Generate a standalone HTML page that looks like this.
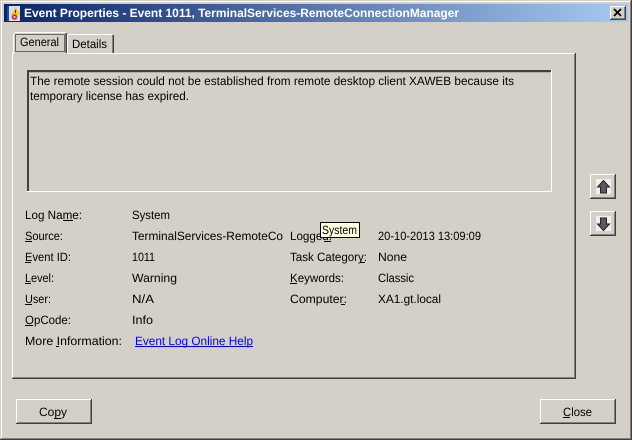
<!DOCTYPE html>
<html>
<head>
<meta charset="utf-8">
<style>
html,body{margin:0;padding:0;background:#D4D0C8;width:632px;height:440px;overflow:hidden}
svg{display:block}
text{font-family:"Liberation Sans",sans-serif;font-size:12px;fill:#000;white-space:pre;text-rendering:geometricPrecision}
</style>
</head>
<body>
<svg width="632" height="440" viewBox="0 0 632 440" xmlns="http://www.w3.org/2000/svg" shape-rendering="crispEdges">
<defs>
<linearGradient id="tb" x1="0" x2="1" y1="0" y2="0"><stop offset="0" stop-color="#0A246A"/><stop offset="1" stop-color="#A6CAF0"/></linearGradient>
<clipPath id="c1"><rect x="130" y="225" width="153" height="20"/></clipPath>
</defs>
<rect width="632" height="440" fill="#D4D0C8"/>
<!-- window frame -->
<rect x="1" y="1" width="630" height="1" fill="#fff"/>
<rect x="1" y="1" width="1" height="437" fill="#fff"/>
<rect x="630" y="1" width="1" height="438" fill="#808080"/>
<rect x="631" y="0" width="1" height="440" fill="#404040"/>
<rect x="1" y="438" width="630" height="1" fill="#808080"/>
<rect x="0" y="439" width="632" height="1" fill="#404040"/>
<!-- title bar -->
<rect x="4" y="4" width="624" height="18" fill="url(#tb)"/>
<g>
<rect x="8" y="6" width="12" height="15" fill="#8ea6cc"/>
<rect x="7" y="6" width="2" height="15" fill="#2c4a86"/>
<rect x="9" y="6" width="11" height="15" fill="#d5deee"/>
<path d="M15.500 7 L20 15 L11 15 Z" fill="#f4c820" shape-rendering="auto"/>
<rect x="15" y="10" width="1" height="3" fill="#222"/>
<circle cx="14.500" cy="17" r="2.800" fill="#c83038" shape-rendering="auto"/>
<circle cx="14.500" cy="17" r="1" fill="#eee" shape-rendering="auto"/>
</g>
<text x="24" y="17" textLength="435" lengthAdjust="spacingAndGlyphs" style="font-weight:bold;fill:#fff">Event Properties - Event 1011, TerminalServices-RemoteConnectionManager</text>
<!-- close button -->
<rect x="610" y="6" width="16" height="14" fill="#D4D0C8"/>
<rect x="610" y="6" width="16" height="1" fill="#fff"/>
<rect x="610" y="6" width="1" height="14" fill="#fff"/>
<rect x="625" y="6" width="1" height="14" fill="#404040"/>
<rect x="610" y="19" width="16" height="1" fill="#404040"/>
<rect x="624" y="7" width="1" height="12" fill="#808080"/>
<rect x="611" y="18" width="14" height="1" fill="#808080"/>
<path d="M614 9 L621 16 M621 9 L614 16" stroke="#000" stroke-width="1.800" fill="none" shape-rendering="auto"/>
<!-- tab panel -->
<rect x="12" y="53" width="1" height="326" fill="#fff"/>
<rect x="12" y="53" width="564" height="1" fill="#fff"/>
<rect x="575" y="53" width="1" height="326" fill="#404040"/>
<rect x="574" y="54" width="1" height="324" fill="#808080"/>
<rect x="12" y="378" width="564" height="1" fill="#404040"/>
<rect x="13" y="377" width="562" height="1" fill="#808080"/>
<!-- General tab -->
<rect x="13" y="33" width="54" height="21" fill="#D4D0C8"/>
<rect x="13" y="34" width="1" height="20" fill="#fff"/>
<rect x="14" y="33" width="1" height="1" fill="#fff"/>
<rect x="15" y="32" width="51" height="1" fill="#fff"/>
<rect x="66" y="33" width="1" height="20" fill="#404040"/>
<rect x="65" y="33" width="1" height="20" fill="#808080"/>
<rect x="15.500" y="34.500" width="49" height="17" fill="none" stroke="#000" stroke-dasharray="1 1"/>
<text x="20" y="46" textLength="39" lengthAdjust="spacingAndGlyphs">General</text>
<!-- Details tab -->
<rect x="67" y="35" width="1" height="18" fill="#fff"/>
<rect x="68" y="34" width="44" height="1" fill="#fff"/>
<rect x="113" y="35" width="1" height="18" fill="#404040"/>
<rect x="112" y="35" width="1" height="18" fill="#808080"/>
<text x="72" y="48" textLength="35" lengthAdjust="spacingAndGlyphs">Details</text>
<!-- message box -->
<rect x="27" y="70" width="525" height="2" fill="#404040"/>
<rect x="27" y="70" width="2" height="122" fill="#404040"/>
<rect x="29" y="72" width="521" height="1" fill="#808080" opacity=".4"/>
<rect x="551" y="70" width="1" height="122" fill="#fff"/>
<rect x="27" y="191" width="525" height="1" fill="#fff"/>
<text x="30" y="85" textLength="484" lengthAdjust="spacingAndGlyphs">The remote session could not be established from remote desktop client XAWEB because its</text>
<text x="30" y="100" textLength="159" lengthAdjust="spacingAndGlyphs">temporary license has expired.</text>
<!-- left labels -->
<text x="25" y="219" textLength="57" lengthAdjust="spacingAndGlyphs">Log Name:</text>
<rect x="63" y="220" width="10" height="1" fill="#000"/>
<text x="25" y="240" textLength="38" lengthAdjust="spacingAndGlyphs">Source:</text>
<rect x="25" y="241" width="7" height="1" fill="#000"/>
<text x="25" y="261" textLength="46" lengthAdjust="spacingAndGlyphs">Event ID:</text>
<rect x="25" y="262" width="6" height="1" fill="#000"/>
<text x="25" y="282" textLength="29" lengthAdjust="spacingAndGlyphs">Level:</text>
<rect x="25" y="283" width="6" height="1" fill="#000"/>
<text x="25" y="303" textLength="26" lengthAdjust="spacingAndGlyphs">User:</text>
<rect x="25" y="304" width="7" height="1" fill="#000"/>
<text x="25" y="324" textLength="46" lengthAdjust="spacingAndGlyphs">OpCode:</text>
<rect x="25" y="325" width="8" height="1" fill="#000"/>
<text x="25" y="345" textLength="97" lengthAdjust="spacingAndGlyphs">More Information:</text>
<rect x="56" y="346" width="3" height="1" fill="#000"/>
<!-- left values -->
<text x="132" y="219" textLength="38" lengthAdjust="spacingAndGlyphs">System</text>
<text x="132" y="240" textLength="151" lengthAdjust="spacingAndGlyphs" clip-path="url(#c1)">TerminalServices-RemoteCo</text>
<text x="132" y="261" textLength="23" lengthAdjust="spacingAndGlyphs">1011</text>
<text x="132" y="282" textLength="45" lengthAdjust="spacingAndGlyphs">Warning</text>
<text x="132" y="303" textLength="22" lengthAdjust="spacingAndGlyphs">N/A</text>
<text x="132" y="324" textLength="21" lengthAdjust="spacingAndGlyphs">Info</text>
<text x="135" y="345" textLength="118" lengthAdjust="spacingAndGlyphs" style="fill:#0000ff">Event Log Online Help</text>
<rect x="135" y="346" width="118" height="1" fill="#0000ff"/>
<!-- right labels -->
<text x="290" y="240" textLength="42" lengthAdjust="spacingAndGlyphs">Logged:</text>
<rect x="324" y="241" width="7" height="1" fill="#000"/>
<text x="290" y="261" textLength="77" lengthAdjust="spacingAndGlyphs">Task Category:</text>
<rect x="360" y="262" width="5" height="1" fill="#000"/>
<text x="290" y="282" textLength="54" lengthAdjust="spacingAndGlyphs">Keywords:</text>
<rect x="290" y="283" width="7" height="1" fill="#000"/>
<text x="290" y="303" textLength="57" lengthAdjust="spacingAndGlyphs">Computer:</text>
<rect x="341" y="304" width="4" height="1" fill="#000"/>
<!-- right values -->
<text x="378" y="240" textLength="103" lengthAdjust="spacingAndGlyphs">20-10-2013 13:09:09</text>
<text x="378" y="261" textLength="29" lengthAdjust="spacingAndGlyphs">None</text>
<text x="378" y="282" textLength="36" lengthAdjust="spacingAndGlyphs">Classic</text>
<text x="378" y="303" textLength="63" lengthAdjust="spacingAndGlyphs">XA1.gt.local</text>
<!-- tooltip -->
<rect x="320.500" y="222.500" width="39" height="15" fill="#FFFFE1" stroke="#000"/>
<text x="322" y="234" textLength="35" lengthAdjust="spacingAndGlyphs">System</text>
<!-- up button -->
<rect x="590" y="174" width="26" height="1" fill="#fff"/>
<rect x="590" y="174" width="1" height="25" fill="#fff"/>
<rect x="615" y="174" width="1" height="25" fill="#404040"/>
<rect x="590" y="198" width="26" height="1" fill="#404040"/>
<rect x="614" y="175" width="1" height="23" fill="#808080"/>
<rect x="591" y="197" width="24" height="1" fill="#808080"/>
<rect x="596" y="179" width="15" height="15" fill="#EFEFEF"/>
<path d="M603.500 180.500 L597.500 187 L600.500 187 L600.500 193 L606.500 193 L606.500 187 L609.500 187 Z" fill="#5a5a5a" stroke="#222" stroke-width="1" shape-rendering="auto"/>
<!-- down button -->
<rect x="590" y="211" width="26" height="1" fill="#fff"/>
<rect x="590" y="211" width="1" height="25" fill="#fff"/>
<rect x="615" y="211" width="1" height="25" fill="#404040"/>
<rect x="590" y="235" width="26" height="1" fill="#404040"/>
<rect x="614" y="212" width="1" height="23" fill="#808080"/>
<rect x="591" y="234" width="24" height="1" fill="#808080"/>
<rect x="596" y="216" width="15" height="15" fill="#EFEFEF"/>
<path d="M603.500 230.500 L597.500 224 L600.500 224 L600.500 218 L606.500 218 L606.500 224 L609.500 224 Z" fill="#5a5a5a" stroke="#222" stroke-width="1" shape-rendering="auto"/>
<!-- Copy button -->
<rect x="16" y="399" width="76" height="1" fill="#fff"/>
<rect x="16" y="399" width="1" height="25" fill="#fff"/>
<rect x="91" y="399" width="1" height="25" fill="#404040"/>
<rect x="16" y="423" width="76" height="1" fill="#404040"/>
<rect x="90" y="400" width="1" height="23" fill="#808080"/>
<rect x="17" y="422" width="74" height="1" fill="#808080"/>
<text x="39" y="416" textLength="28" lengthAdjust="spacingAndGlyphs">Copy</text>
<rect x="54" y="418" width="7" height="1" fill="#000"/>
<!-- Close button -->
<rect x="540" y="399" width="76" height="1" fill="#fff"/>
<rect x="540" y="399" width="1" height="25" fill="#fff"/>
<rect x="615" y="399" width="1" height="25" fill="#404040"/>
<rect x="540" y="423" width="76" height="1" fill="#404040"/>
<rect x="614" y="400" width="1" height="23" fill="#808080"/>
<rect x="541" y="422" width="74" height="1" fill="#808080"/>
<text x="563" y="416" textLength="29" lengthAdjust="spacingAndGlyphs">Close</text>
<rect x="563" y="417" width="7" height="1" fill="#000"/>
</svg>
</body>
</html>
